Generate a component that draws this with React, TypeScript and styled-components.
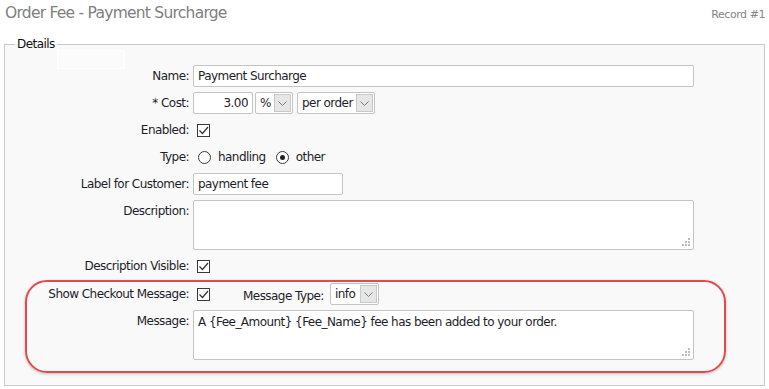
import React from 'react'
import { styled, createGlobalStyle } from 'styled-components'

const Global = createGlobalStyle`
body {
  margin: 0;
  background: #ffffff;
  font-family: "DejaVu Sans", Verdana, sans-serif;
  font-size: 12px;
  letter-spacing: -0.55px;
  color: #1e1e2a;
}
`

const Grip = () => (
    <GripSvg width="8" height="8" viewBox="0 0 8 8">
        <rect x="6" y="0" width="2" height="2" fill="#bdbdbd" />
        <rect x="3" y="3" width="2" height="2" fill="#bdbdbd" />
        <rect x="6" y="3" width="2" height="2" fill="#bdbdbd" />
        <rect x="0" y="6" width="2" height="2" fill="#bdbdbd" />
        <rect x="3" y="6" width="2" height="2" fill="#bdbdbd" />
        <rect x="6" y="6" width="2" height="2" fill="#bdbdbd" />
    </GripSvg>
)

const Chevron = () => (
    <svg width="9" height="5" viewBox="0 0 9 5">
        <path d="M0.5 0.5 L4.5 4.5 L8.5 0.5" fill="none" stroke="#7a7a7a" strokeWidth="1" />
    </svg>
)

const Check = () => (
    <svg width="11" height="11" viewBox="0 0 11 11">
        <path d="M1.5 5.5 L4.5 8.5 L10 2" fill="none" stroke="#333" strokeWidth="1.2" />
    </svg>
)

const Select = ({ value, width }: { value: string, width: number }) => (
    <SelectBox style={{ width }}>
        <SelectValue>{value}</SelectValue>
        <Arrow><Chevron /></Arrow>
    </SelectBox>
)

const App = () => {
    return (
        <Page>
            <Global />
            <Header>
                <Title>Order Fee - Payment Surcharge</Title>
                <Record>Record #1</Record>
            </Header>
            <Fieldset>
                <Legend>Details</Legend>
                <GhostBox />
                <Form>
                    <Row $label={184}>
                        <Label>Name:</Label>
                        <Input $w={501} defaultValue="Payment Surcharge" />
                    </Row>
                    <Row $label={184}>
                        <Label>* Cost:</Label>
                        <Inline>
                            <Input $w={60} $right defaultValue="3.00" />
                            <Select value="%" width={38} />
                            <Spacer $w={2} />
                            <Select value="per order" width={78} />
                        </Inline>
                    </Row>
                    <Row $label={184}>
                        <Label>Enabled:</Label>
                        <Inline>
                            <CheckBox><Check /></CheckBox>
                        </Inline>
                    </Row>
                    <Row $label={184}>
                        <Label>Type:</Label>
                        <Inline>
                            <Radio />
                            <OptionText>handling</OptionText>
                            <Radio $checked />
                            <OptionText>other</OptionText>
                        </Inline>
                    </Row>
                    <Row $label={184}>
                        <Label>Label for Customer:</Label>
                        <Input $w={150} defaultValue="payment fee" />
                    </Row>
                    <Row $label={184} $top>
                        <Label>Description:</Label>
                        <TextArea>
                            <Grip />
                        </TextArea>
                    </Row>
                    <Row $label={184}>
                        <Label>Description Visible:</Label>
                        <Inline>
                            <CheckBox><Check /></CheckBox>
                        </Inline>
                    </Row>
                    <Highlight>
                        <Row $label={162}>
                            <Label>Show Checkout Message:</Label>
                            <Inline>
                                <CheckBox><Check /></CheckBox>
                                <TypeLabel>Message Type:</TypeLabel>
                                <Select value="info" width={49} />
                            </Inline>
                        </Row>
                        <Row $label={162} $top>
                            <Label>Message:</Label>
                            <TextArea>
                                A {'{Fee_Amount}'} {'{Fee_Name}'} fee has been added to your order.
                                <Grip />
                            </TextArea>
                        </Row>
                    </Highlight>
                </Form>
            </Fieldset>
        </Page>
    )
}

export default App

const Page = styled.div`
padding: 0 4px;
`

const Header = styled.div`
display: flex;
justify-content: space-between;
align-items: flex-start;
height: 37px;
`

const Title = styled.h1`
margin: 0;
padding: 3px 0 0 1px;
font-size: 15.5px;
line-height: 20px;
letter-spacing: -0.75px;
font-weight: normal;
color: #808080;
`

const Record = styled.div`
font-size: 11px;
letter-spacing: -0.45px;
color: #858585;
padding-top: 8px;
`

const Fieldset = styled.fieldset`
position: relative;
margin: 0;
padding: 0 0 12px;
min-width: 0;
border: 1px solid #c9c9c9;
background: #f9f9f9;
`

const Legend = styled.legend`
margin-left: 10px;
padding: 0 2px;
line-height: 14px;
color: #111;
`

const GhostBox = styled.span`
position: absolute;
left: 52px;
top: -1px;
width: 66px;
height: 17px;
border: 1px solid #ffffff;
background: #fbfbfb;
`

const Form = styled.div`
display: flex;
flex-direction: column;
gap: 5px;
padding-top: 14px;
`

const Row = styled.div<{ $label: number, $top?: boolean }>`
display: grid;
grid-template-columns: ${({ $label }) => $label}px 1fr;
column-gap: 4px;
align-items: ${({ $top }) => $top ? "start" : "center"};
min-height: 22px;
`

const Label = styled.div`
text-align: right;
line-height: 22px;
white-space: nowrap;
`

const Inline = styled.div`
display: flex;
align-items: center;
height: 22px;
`

const Spacer = styled.div<{ $w: number }>`
width: ${({ $w }) => $w}px;
`

const Input = styled.input<{ $w: number, $right?: boolean }>`
box-sizing: border-box;
width: ${({ $w }) => $w}px;
height: 22px;
margin: 0;
padding: 0 4px;
border: 1px solid #c4c4c4;
border-radius: 2px;
background: #fff;
font-family: inherit;
font-size: 12px;
letter-spacing: inherit;
color: #1e1e2a;
text-align: ${({ $right }) => $right ? "right" : "left"};
outline: none;
`

const SelectBox = styled.div`
box-sizing: border-box;
display: flex;
align-items: stretch;
height: 22px;
margin-left: 2px;
border: 1px solid #c4c4c4;
border-radius: 2px;
background: #fff;
`

const SelectValue = styled.div`
flex: 1;
padding-left: 4px;
line-height: 20px;
white-space: nowrap;
overflow: hidden;
`

const Arrow = styled.div`
display: flex;
align-items: center;
justify-content: center;
width: 17px;
margin: 1px 1px 1px 0;
background: #e6e6e6;
border: 1px solid #c8c8c8;
box-sizing: border-box;
`

const CheckBox = styled.div`
box-sizing: border-box;
display: flex;
align-items: center;
justify-content: center;
width: 13px;
height: 13px;
margin-left: 4px;
border: 1px solid #3a3a3a;
background: #fff;
`

const Radio = styled.div<{ $checked?: boolean }>`
box-sizing: border-box;
width: 13px;
height: 13px;
margin-left: 5px;
border: 1px solid #3a3a3a;
border-radius: 50%;
background: #fff;
position: relative;
&::after {
  content: "";
  display: ${({ $checked }) => $checked ? "block" : "none"};
  position: absolute;
  left: 3px;
  top: 3px;
  width: 5px;
  height: 5px;
  border-radius: 50%;
  background: #222;
}
& + & {
  margin-left: 10px;
}
`

const OptionText = styled.span`
margin-left: 7px;
margin-right: 5px;
`

const TypeLabel = styled.span`
margin-left: 33px;
margin-right: 4px;
position: relative;
top: 2px;
`

const TextArea = styled.div`
position: relative;
box-sizing: border-box;
width: 501px;
height: 50px;
padding: 4px;
border: 1px solid #c4c4c4;
border-radius: 2px;
background: #fff;
line-height: 14px;
`

const GripSvg = styled.svg`
position: absolute;
right: 3px;
bottom: 3px;
`

const Highlight = styled.div`
display: flex;
flex-direction: column;
gap: 5px;
margin: -2px 0 0 20px;
width: 701px;
box-sizing: border-box;
padding: 1px 0 11px;
border: 2px solid #e14b4b;
border-radius: 22px;
box-shadow: 0 1px 3px rgba(0, 0, 0, 0.25);
`
